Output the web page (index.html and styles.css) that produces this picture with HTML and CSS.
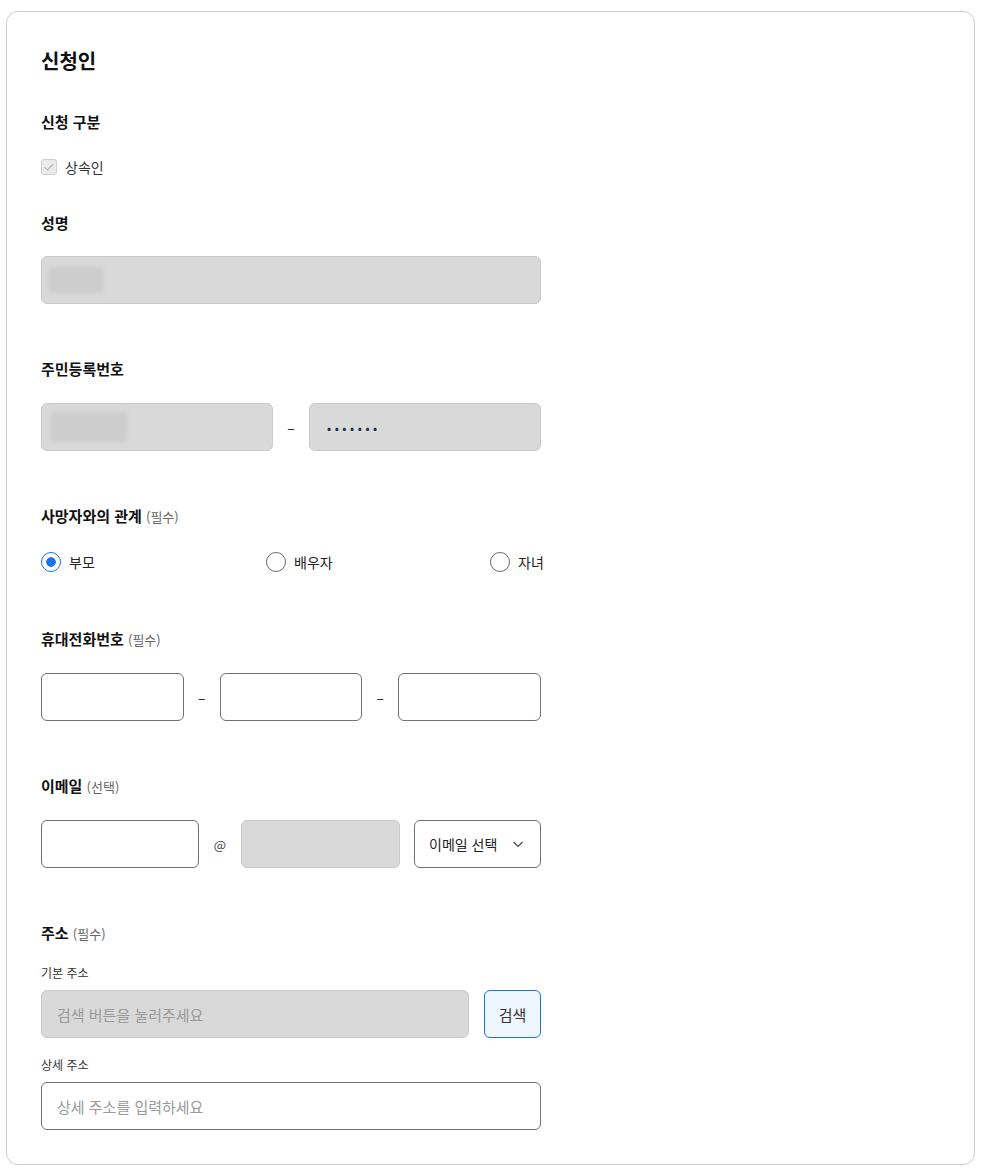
FILE: index.html
```html
<!DOCTYPE html>
<html lang="ko">

<head>
    <meta charset="UTF-8" />
    <meta name="viewport" content="width=device-width, initial-scale=1.0" />
    <title>신청인</title>
    <link rel="stylesheet" href="styles.css">
</head>

<body>
    <section class="card">
        <h1 class="card-title">신청인</h1>

        <div class="field field-first">
            <div class="field-label">신청 구분</div>
            <label class="check">
                <span class="check-box">
                    <svg viewBox="0 0 16 16" width="14" height="14"><path d="M3 8.2l3.2 3.1L13 4.6" fill="none" stroke="#b8b8b8" stroke-width="1.3" /></svg>
                </span>
                <span>상속인</span>
            </label>
        </div>

        <div class="field field-name">
            <div class="field-label">성명</div>
            <div class="input is-disabled">
                <span class="masked masked-name"></span>
            </div>
        </div>

        <div class="field">
            <div class="field-label">주민등록번호</div>
            <div class="input-row id-row">
                <div class="input is-disabled grow">
                    <span class="masked masked-id"></span>
                </div>
                <span class="sep">–</span>
                <div class="input is-disabled grow">
                    <span class="dots">•••••••</span>
                </div>
            </div>
        </div>

        <div class="field">
            <div class="field-label">사망자와의 관계 <small>(필수)</small></div>
            <div class="radio-group">
                <label class="radio"><input type="radio" name="relation" checked /><span>부모</span></label>
                <label class="radio"><input type="radio" name="relation" /><span>배우자</span></label>
                <label class="radio"><input type="radio" name="relation" /><span>자녀</span></label>
            </div>
        </div>

        <div class="field field-phone">
            <div class="field-label">휴대전화번호 <small>(필수)</small></div>
            <div class="input-row">
                <input class="input grow" type="text" />
                <span class="sep">–</span>
                <input class="input grow" type="text" />
                <span class="sep">–</span>
                <input class="input grow" type="text" />
            </div>
        </div>

        <div class="field">
            <div class="field-label">이메일 <small>(선택)</small></div>
            <div class="input-row">
                <input class="input email-id" type="text" />
                <span class="at">@</span>
                <div class="input is-disabled email-domain"></div>
                <div class="select">
                    <span>이메일 선택</span>
                    <svg viewBox="0 0 14 14" width="14" height="14"><path d="M2.5 5l4.5 4.5L11.5 5" fill="none" stroke="#444" stroke-width="1.2" /></svg>
                </div>
            </div>
        </div>

        <div class="field">
            <div class="field-label">주소 <small>(필수)</small></div>
            <div class="sub-label">기본 주소</div>
            <div class="input-row">
                <input class="input is-disabled grow" type="text" placeholder="검색 버튼을 눌러주세요" disabled />
                <button class="btn-search" type="button">검색</button>
            </div>
            <div class="sub-label sub-label-next">상세 주소</div>
            <input class="input full" type="text" placeholder="상세 주소를 입력하세요" />
        </div>
    </section>
</body>

</html>
```

FILE: styles.css
```css
body {
    margin: 11px 6px 4px 6px;
    font-family: "Noto Sans CJK KR", "Noto Sans", sans-serif;
    color: #111;
    background: #fff;
}

.card {
    border: 1px solid #cdcdcd;
    border-radius: 12px;
    padding: 35px 34px 34px 34px;
}

.card-title {
    margin: 0;
    font-size: 20px;
    line-height: 28px;
    font-weight: 700;
}

/* 항목 하나: 라벨 + 입력 (마진 겹침 방지용 flex) */
.field {
    display: flex;
    flex-direction: column;
    width: 500px;
    margin-top: 54px;
}

.field-first {
    margin-top: 36px;
}

.field-name {
    margin-top: 35px;
}

.field-phone {
    margin-top: 56px;
}

.field-label {
    font-size: 15px;
    line-height: 22px;
    font-weight: 700;
    margin-bottom: 22px;
}

.field-label small {
    font-size: 13px;
    font-weight: 400;
    color: #666;
}

.field-first .field-label {
    margin-bottom: 24px;
}

/* 체크박스 (비활성) */
.check {
    display: flex;
    align-items: center;
    gap: 8px;
    height: 20px;
    font-size: 14px;
    color: #333;
}

.check-box {
    width: 16px;
    height: 16px;
    box-sizing: border-box;
    border: 1px solid #cfcfcf;
    border-radius: 3px;
    background: #ebebeb;
    display: flex;
    align-items: center;
    justify-content: center;
}

/* 입력창 */
.input {
    box-sizing: border-box;
    height: 48px;
    border: 1px solid #6f6f6f;
    border-radius: 6px;
    background: #fff;
    padding: 0 15px;
    font-family: inherit;
    font-size: 15px;
    color: #111;
    display: flex;
    align-items: center;
    margin: 0;
}

.input::placeholder {
    color: #9a9a9a;
}

.input.is-disabled {
    background: #d9d9d9;
    border-color: #c9c9c9;
}

.input.full {
    width: 100%;
}

.input-row {
    display: flex;
    align-items: center;
}

.id-row {
    margin-top: 1px;
}

.grow {
    flex: 1;
    min-width: 0;
}

.sep {
    width: 36px;
    text-align: center;
    font-size: 14px;
    color: #222;
}

/* 마스킹된 값 */
.masked {
    display: block;
    background: #cdcdcd;
    filter: blur(2px);
}

.masked-name {
    width: 54px;
    height: 26px;
    margin-left: -8px;
}

.masked-id {
    width: 76px;
    height: 30px;
    margin-left: -6px;
}

.dots {
    font-size: 12px;
    letter-spacing: 3.6px;
    color: #1d2a4a;
    margin-left: 2px;
}

/* 라디오 */
.radio-group {
    display: grid;
    grid-template-columns: 225px 224px auto;
    width: 520px;
    margin-top: 2px;
}

.radio {
    display: flex;
    align-items: center;
    gap: 8px;
    height: 20px;
    font-size: 14px;
    color: #222;
}

.radio input {
    appearance: none;
    margin: 0;
    width: 20px;
    height: 20px;
    box-sizing: border-box;
    border: 1.5px solid #6b6b6b;
    border-radius: 50%;
    background: #fff;
}

.radio input:checked {
    border-color: #1a73e8;
    background: radial-gradient(circle, #1a73e8 0 4.5px, #fff 5px);
}

/* 이메일 */
.email-id {
    width: 158px;
}

.at {
    width: 42px;
    text-align: center;
    font-size: 13px;
    color: #444;
}

.email-domain {
    width: 159px;
}

.select {
    box-sizing: border-box;
    width: 127px;
    height: 48px;
    margin-left: 14px;
    border: 1px solid #6f6f6f;
    border-radius: 6px;
    padding: 0 15px 0 14px;
    display: flex;
    align-items: center;
    justify-content: space-between;
    font-size: 14px;
    color: #222;
}

/* 주소 */
.sub-label {
    font-size: 12px;
    line-height: 18px;
    color: #333;
    margin-top: -3px;
    margin-bottom: 8px;
}

.sub-label-next {
    margin-top: 18px;
}

.btn-search {
    box-sizing: border-box;
    width: 57px;
    height: 48px;
    margin-left: 15px;
    border: 1px solid #1a73e8;
    border-radius: 6px;
    background: #eef6ff;
    font-family: inherit;
    font-size: 15px;
    color: #333;
    padding: 0;
}
```
